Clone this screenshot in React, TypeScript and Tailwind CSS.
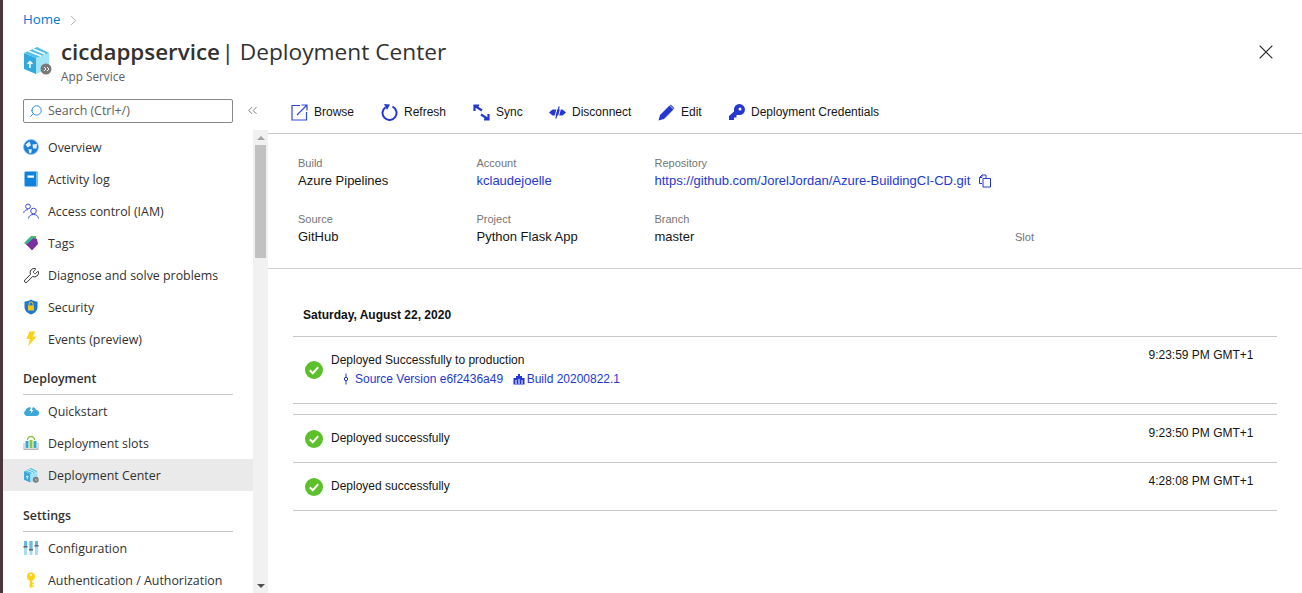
import { ReactNode } from 'react';
import { X, Search, ChevronRight, ChevronsLeft, Wrench } from 'lucide-react';

const BoxIcon = ({ className = 'w-[17px] h-[17px]' }: { className?: string }) => (
  <svg viewBox="0 0 30 30" className={className}>
    <path d="M2 8 L14 13 V29 L2 24 Z" fill="#32a8dd" />
    <path d="M14 13 L27 8 V23 L14 29 Z" fill="#a0e4f8" />
    <path d="M2 8 L15 2 L27 8 L14 13 Z" fill="#50c0e8" />
    <path d="M6 6 L19 11 M11 4 L23 9" stroke="#fff" strokeWidth="1.4" />
    <path d="M8 23 V17 M5.5 19 L8 16.5 L10.5 19" stroke="#fff" strokeWidth="1.5" fill="none" />
    <circle cx="24" cy="24" r="5.5" fill="#7a7a7a" />
    <path d="M22 22 L24 24 L22 26 M25 22 L27 24 L25 26" stroke="#fff" strokeWidth="0.9" fill="none" />
  </svg>
);

const MenuIcon = ({ name }: { name: string }) => {
  const cls = 'w-4 h-4';
  switch (name) {
    case 'overview':
      return (
        <svg viewBox="0 0 16 16" className={cls}>
          <circle cx="8" cy="8" r="7.5" fill="#1f7fd8" />
          <circle cx="8" cy="8" r="7.5" fill="none" stroke="#8cc4f2" strokeWidth="0.8" />
          <path d="M2.5 5.5 L6.5 2.5 L8 6.5 L4.5 8.5 Z M9.5 5.5 L14 5 L13.5 9.5 L10 9.5 Z M5.5 10 L9 10.5 L8 14.5 L6 13.5 Z" fill="#e4f1fc" />
        </svg>
      );
    case 'log':
      return (
        <svg viewBox="0 0 16 16" className={cls}>
          <rect x="1.5" y="0.5" width="13" height="15" rx="1" fill="#0f82dc" />
          <rect x="13" y="0.5" width="1.5" height="15" fill="#7cc0ee" />
          <rect x="4.5" y="4.5" width="6.5" height="2.2" fill="#fff" />
        </svg>
      );
    case 'iam':
      return (
        <svg viewBox="0 0 16 16" className={cls} fill="none" stroke="#3c4fd8" strokeWidth="1">
          <circle cx="5" cy="3.5" r="2.4" />
          <path d="M0.7 10 C1 7.5 3 6.7 5 6.7" />
          <circle cx="10.5" cy="8" r="2.8" />
          <path d="M5.5 15.5 C6 12.5 8 11.5 10.5 11.5 C13 11.5 15 12.5 15.5 15.5" />
        </svg>
      );
    case 'tags':
      return (
        <svg viewBox="0 0 16 16" className={cls}>
          <path d="M1 8 L8 1 L13 1 L13 6 L6 12 Z" fill="#5cb85c" />
          <path d="M3 9 L10 3 L14 4 L15 9 L9 15.5 Z" fill="#7a2f9e" />
          <path d="M2.5 7 L8 2 L10.5 3 L4 9 Z" fill="#2fb6a0" />
        </svg>
      );
    case 'diag':
      return <Wrench className="w-[17px] h-[17px] text-[#252525] -mr-[1px]" strokeWidth={1.3} />;
    case 'security':
      return (
        <svg viewBox="0 0 16 16" className={cls}>
          <path d="M8 0.5 C10 2 12.5 2.5 14.5 2.5 V8 C14.5 12 11 14.5 8 15.5 C5 14.5 1.5 12 1.5 8 V2.5 C3.5 2.5 6 2 8 0.5 Z" fill="#1a78d0" />
          <rect x="5" y="6.5" width="6" height="5" fill="#f5c518" />
          <path d="M6 6.5 V5 A2 2 0 0 1 10 5 V6.5" fill="none" stroke="#f5c518" strokeWidth="1" />
        </svg>
      );
    case 'events':
      return (
        <svg viewBox="0 0 16 16" className={cls}>
          <path d="M6.5 0.5 H12.5 L9.5 5.5 H13.5 L5 15.5 L7 8 H3.5 Z" fill="#fcd116" />
        </svg>
      );
    case 'quickstart':
      return (
        <svg viewBox="0 0 16 16" className={cls}>
          <path d="M3.5 13 A3 3 0 0 1 2.5 7.5 A4 4 0 0 1 8 4.5 A3.5 3.5 0 0 1 13 7 A3 3 0 0 1 13 13 Z" fill="#3da8d8" />
          <path d="M8.5 3.5 L6.5 8 H8.5 L7.5 11 L10.5 7 H8.8 L10 3.5 Z" fill="#fff" />
        </svg>
      );
    case 'slots':
      return (
        <svg viewBox="0 0 16 16" className={cls}>
          <path d="M0.5 13 V8 H1.5 V13.5 H14.5 V8 H15.5 V15 H0.5 Z" fill="#b5b5b5" />
          <path d="M4.5 5 A3.5 3.5 0 0 1 11.5 5" fill="none" stroke="#8cc63f" strokeWidth="1.3" />
          <rect x="2.5" y="6" width="3" height="7" fill="#32a8dd" />
          <rect x="6.5" y="5" width="3" height="8" fill="#8cc63f" />
          <rect x="10.5" y="6" width="3" height="7" fill="#32a8dd" />
        </svg>
      );
    case 'center':
      return <BoxIcon className="w-4 h-4" />;
    case 'config':
      return (
        <svg viewBox="0 0 16 16" className={cls}>
          <rect x="1" y="1" width="3" height="14" fill="#a8dcf2" />
          <rect x="6.5" y="1" width="3" height="14" fill="#a8dcf2" />
          <rect x="12" y="1" width="3" height="14" fill="#a8dcf2" />
          <rect x="1" y="1" width="3" height="6" fill="#6bb8e0" />
          <rect x="6.5" y="1" width="3" height="9" fill="#6bb8e0" />
          <rect x="12" y="1" width="3" height="5" fill="#6bb8e0" />
          <rect x="0.5" y="6" width="4" height="1.6" fill="#666" />
          <rect x="6" y="9" width="4" height="1.6" fill="#666" />
          <rect x="11.5" y="5" width="4" height="1.6" fill="#666" />
        </svg>
      );
    default:
      return (
        <svg viewBox="0 0 16 16" className={cls}>
          <circle cx="8" cy="4.5" r="4" fill="#fcd116" />
          <rect x="6.7" y="7" width="2.6" height="8.5" fill="#fcd116" />
          <rect x="9" y="11" width="2" height="1.3" fill="#fcd116" />
          <rect x="9" y="13.5" width="2" height="1.3" fill="#fcd116" />
          <circle cx="8" cy="3" r="1" fill="#fff" />
        </svg>
      );
  }
};

const MenuRow = ({ icon, label, active }: { icon: string; label: string; active?: boolean }) => (
  <div className={`shrink-0 flex items-center h-8 pl-5 gap-[9px] text-[12.4px] text-[#323130] ${active ? 'bg-[#ebeaea]' : ''}`}>
    <MenuIcon name={icon} />
    <span className="pt-[2px]">{label}</span>
  </div>
);

const MenuHeading = ({ label, className }: { label: string; className: string }) => (
  <div className={`shrink-0 mx-5 h-[33px] pt-[2px] flex items-center border-b border-[#c8c6c4] text-[12.4px] font-semibold text-[#323130] ${className}`}>
    {label}
  </div>
);

const ToolButton = ({ icon, label, className }: { icon: ReactNode; label: string; className: string }) => (
  <div className={`flex items-center gap-[6px] ${className}`}>
    {icon}
    <span className="text-xs text-[#151515]">{label}</span>
  </div>
);

const InfoCell = ({ label, children }: { label: string; children: ReactNode }) => (
  <div className="h-14">
    <div className="text-[11px] leading-[14px] text-[#757575]">{label}</div>
    <div className="mt-[2px] text-[13px] leading-[18px] text-[#151515]">{children}</div>
  </div>
);

const CheckIcon = () => (
  <svg viewBox="0 0 18 18" className="w-[18px] h-[18px] shrink-0">
    <circle cx="9" cy="9" r="9" fill="#5cc02a" />
    <path d="M4.8 9.3 L7.8 12.2 L13.2 6.2" fill="none" stroke="#fff" strokeWidth="2" />
  </svg>
);

const DeployRow = ({ title, time }: { title: string; time: string }) => (
  <div className="h-12 border-b border-[#c8c8c8] flex pl-3 pr-[23.5px] text-xs text-[#151515]">
    <div className="flex items-center gap-2 h-[47px] pt-[1px]">
      <CheckIcon />
      <span className="relative -top-[1px]">{title}</span>
    </div>
    <div className="ml-auto pt-[10px]">{time}</div>
  </div>
);

export default function App() {
  return (
    <div className="w-[1302px] h-[593px] overflow-hidden flex bg-white font-['Open_Sans',sans-serif]">
      <div className="w-[3px] bg-[#4a363c] shrink-0" />
      <div className="flex-1 min-w-0 flex flex-col">
        <div className="h-[96px] shrink-0 pl-5 pt-[11px] pr-6">
          <div className="flex items-center gap-[4px] h-[18px] text-[13.3px] text-[#0078d4]">
            <span>Home</span>
            <ChevronRight className="w-[17px] h-[17px] text-[#8a8886]" strokeWidth={1} />
          </div>
          <div className="flex items-start mt-2">
            <BoxIcon className="w-[30px] h-[30px] mt-2 -ml-[1px] shrink-0" />
            <div className="ml-[9px]">
              <div className="text-[22.7px] leading-[30px] text-[#323130] whitespace-nowrap">
                <span className="font-semibold text-[22.4px]">cicdappservice</span>
                <span className="-ml-[4.5px]"> | Deployment Center</span>
              </div>
              <div className="mt-px text-[11.8px] leading-[16px] text-[#605e5c]">App Service</div>
            </div>
            <X className="ml-auto mt-[3px] w-6 h-6 text-[#323130]" strokeWidth={1.1} />
          </div>
        </div>
        <div className="flex-1 min-h-0 flex">
          <div className="w-[250px] shrink-0 flex flex-col">
            <div className="h-[35px] shrink-0 pl-5 pt-[3px] flex items-start">
              <div className="w-[210px] h-6 border border-[#8a8886] rounded-[2px] flex items-center pl-[5px] gap-[5px] text-[12.4px] text-[#605e5c]">
                <Search className="w-[14px] h-[14px] text-[#0078d4] -scale-x-100" strokeWidth={1.4} />
                <span>Search (Ctrl+/)</span>
              </div>
            </div>
            <MenuRow icon="overview" label="Overview" />
            <MenuRow icon="log" label="Activity log" />
            <MenuRow icon="iam" label="Access control (IAM)" />
            <MenuRow icon="tags" label="Tags" />
            <MenuRow icon="diag" label="Diagnose and solve problems" />
            <MenuRow icon="security" label="Security" />
            <MenuRow icon="events" label="Events (preview)" />
            <MenuHeading label="Deployment" className="mt-[7px]" />
            <MenuRow icon="quickstart" label="Quickstart" />
            <MenuRow icon="slots" label="Deployment slots" />
            <MenuRow icon="center" label="Deployment Center" active />
            <MenuHeading label="Settings" className="mt-2" />
            <MenuRow icon="config" label="Configuration" />
            <MenuRow icon="auth" label="Authentication / Authorization" />
          </div>
          <div className="w-[15px] shrink-0 flex flex-col">
            <div className="h-[34px] shrink-0 flex items-start">
              <ChevronsLeft className="w-[15px] h-[15px] text-[#323130] mt-[7px] -ml-[8px]" strokeWidth={1} />
            </div>
            <div className="flex-1 bg-[#f1f1f1] flex flex-col items-center">
              <div className="h-[15px] flex items-center">
                <div className="w-0 h-0 border-x-[4px] border-x-transparent border-b-[4px] border-b-[#a3a3a3]" />
              </div>
              <div className="w-[11px] h-[113px] bg-[#c1c1c1]" />
              <div className="mt-auto h-[15px] flex items-center">
                <div className="w-0 h-0 border-x-[4px] border-x-transparent border-t-[4px] border-t-[#505050]" />
              </div>
            </div>
          </div>
          <div className="flex-1 min-w-0 flex flex-col font-['Liberation_Sans',sans-serif]">
            <div className="h-[38px] shrink-0 border-b border-[#c8c8c8] flex items-center pl-[23px] pb-[6px] pt-[1px]">
              <ToolButton
                className="w-[90px]"
                label="Browse"
                icon={
                  <svg viewBox="0 0 17 17" className="w-[17px] h-[17px]" fill="none" stroke="#3048d8" strokeWidth="1.2">
                    <path d="M15.5 8 V16 H1 V1.5 H9" />
                    <path d="M6 11 L15.5 1.5 M10.5 1 H16 V6.5" />
                  </svg>
                }
              />
              <ToolButton
                className="w-[92px]"
                label="Refresh"
                icon={
                  <svg viewBox="0 0 17 17" className="w-[17px] h-[17px]" fill="none" stroke="#2438d0" strokeWidth="2">
                    <path d="M4.5 3.2 A7 7 0 1 0 11.5 2.6" />
                    <path d="M3 0 L9 0.5 L6 6 Z" fill="#2438d0" stroke="none" />
                  </svg>
                }
              />
              <ToolButton
                className="w-[76px]"
                label="Sync"
                icon={
                  <svg viewBox="0 0 17 17" className="w-[17px] h-[17px]" fill="none" stroke="#2438d0" strokeWidth="2.2">
                    <path d="M9 6.5 L2 2 M1.5 7 V1.5 H6" />
                    <path d="M8 10.5 L15 15 M15.5 10 V15.5 H11" />
                  </svg>
                }
              />
              <ToolButton
                className="w-[109px]"
                label="Disconnect"
                icon={
                  <svg viewBox="0 0 17 17" className="w-[17px] h-[17px]">
                    <path d="M0 8.5 L3.5 5.5 H13.5 L17 8.5 L13.5 11.5 H3.5 Z" fill="#2438d0" />
                    <path d="M5.5 14 L8.5 3 M9 14 L12 3" stroke="#fff" strokeWidth="1" />
                    <path d="M6.8 14.5 L10.2 2.5" stroke="#2438d0" strokeWidth="1.2" />
                  </svg>
                }
              />
              <ToolButton
                className="w-[70px]"
                label="Edit"
                icon={
                  <svg viewBox="0 0 17 17" className="w-[17px] h-[17px]" fill="#2438d0">
                    <path d="M0.5 16.5 L2 11 L11.5 1.5 L15.5 5.5 L6 15 Z" />
                    <path d="M12.7 0.5 L16.5 4.3 L15.8 5 L12 1.2 Z" />
                  </svg>
                }
              />
              <ToolButton
                className="w-[160px]"
                label="Deployment Credentials"
                icon={
                  <svg viewBox="0 0 17 17" className="w-[17px] h-[17px]">
                    <path d="M6 6 A5.5 5.5 0 1 1 11 11 L8.5 11 V13.5 H6 V16 H1 V12 L6 7.5 Z" fill="#2438d0" />
                    <circle cx="12" cy="5" r="1.5" fill="#fff" />
                  </svg>
                }
              />
            </div>
            <div className="h-[135px] shrink-0 border-b border-[#d0d0d0] pl-[30px] pt-[22px]">
              <div className="grid grid-cols-[178.5px_178px_360.5px_auto]">
                <InfoCell label="Build">Azure Pipelines</InfoCell>
                <InfoCell label="Account">
                  <span className="text-[#2438d0]">kclaudejoelle</span>
                </InfoCell>
                <InfoCell label="Repository">
                  <span className="flex items-center gap-2 text-[#2438d0]">
                    https://github.com/JorelJordan/Azure-BuildingCI-CD.git
                    <svg viewBox="0 0 14 14" className="w-[14px] h-[14px]" fill="none" stroke="#2438d0" strokeWidth="1">
                      <path d="M4 9.5 H1.5 V3.5 L4 1 H8 V4" />
                      <path d="M5 4.5 H12.5 V13 H5 Z M4 1 V3.5 H1.5" />
                    </svg>
                  </span>
                </InfoCell>
                <div />
                <InfoCell label="Source">GitHub</InfoCell>
                <InfoCell label="Project">Python Flask App</InfoCell>
                <InfoCell label="Branch">master</InfoCell>
                <div className="pt-4 text-[11px] leading-[18px] text-[#757575]">Slot</div>
              </div>
            </div>
            <div className="pl-[25px] pr-[25px]">
              <div className="h-[68px] border-b border-[#c8c8c8] pl-[10px] pt-[37px] text-xs leading-[18px] font-bold text-[#111]">
                Saturday, August 22, 2020
              </div>
              <div className="h-[67px] border-b border-[#c8c8c8] flex pl-3 pr-[23.5px] text-xs text-[#151515]">
                <div className="flex items-start gap-2 pt-[15px]">
                  <div className="pt-[9px]">
                    <CheckIcon />
                  </div>
                  <div>
                    <div className="h-[18px] leading-[16px]">Deployed Successfully to production</div>
                    <div className="flex items-center pl-[11px] h-[18px] text-[#2438d0]">
                      <svg viewBox="0 0 8 12" className="w-[8px] h-[12px] mr-[5px]" fill="none" stroke="#2438d0" strokeWidth="1">
                        <circle cx="4" cy="6" r="1.7" />
                        <path d="M4 0.5 V4 M4 8 V11.5" />
                      </svg>
                      <span>Source Version e6f2436a49</span>
                      <svg viewBox="0 0 12 12" className="w-[12px] h-[12px] ml-[9.5px] mr-[2px]" fill="#2438d0">
                        <path d="M0.5 5 H3 V3 H5 V1 H7 V3 H9 V5 H11.5 V11.5 H0.5 Z" />
                        <path d="M3 7 V11 M6 6 V11 M9 7 V11" stroke="#fff" strokeWidth="1" />
                      </svg>
                      <span>Build 20200822.1</span>
                    </div>
                  </div>
                </div>
                <div className="ml-auto pt-[10px]">9:23:59 PM GMT+1</div>
              </div>
              <div className="h-[11px] border-b border-[#c8c8c8]" />
              <DeployRow title="Deployed successfully" time="9:23:50 PM GMT+1" />
              <DeployRow title="Deployed successfully" time="4:28:08 PM GMT+1" />
            </div>
          </div>
        </div>
      </div>
    </div>
  );
}
